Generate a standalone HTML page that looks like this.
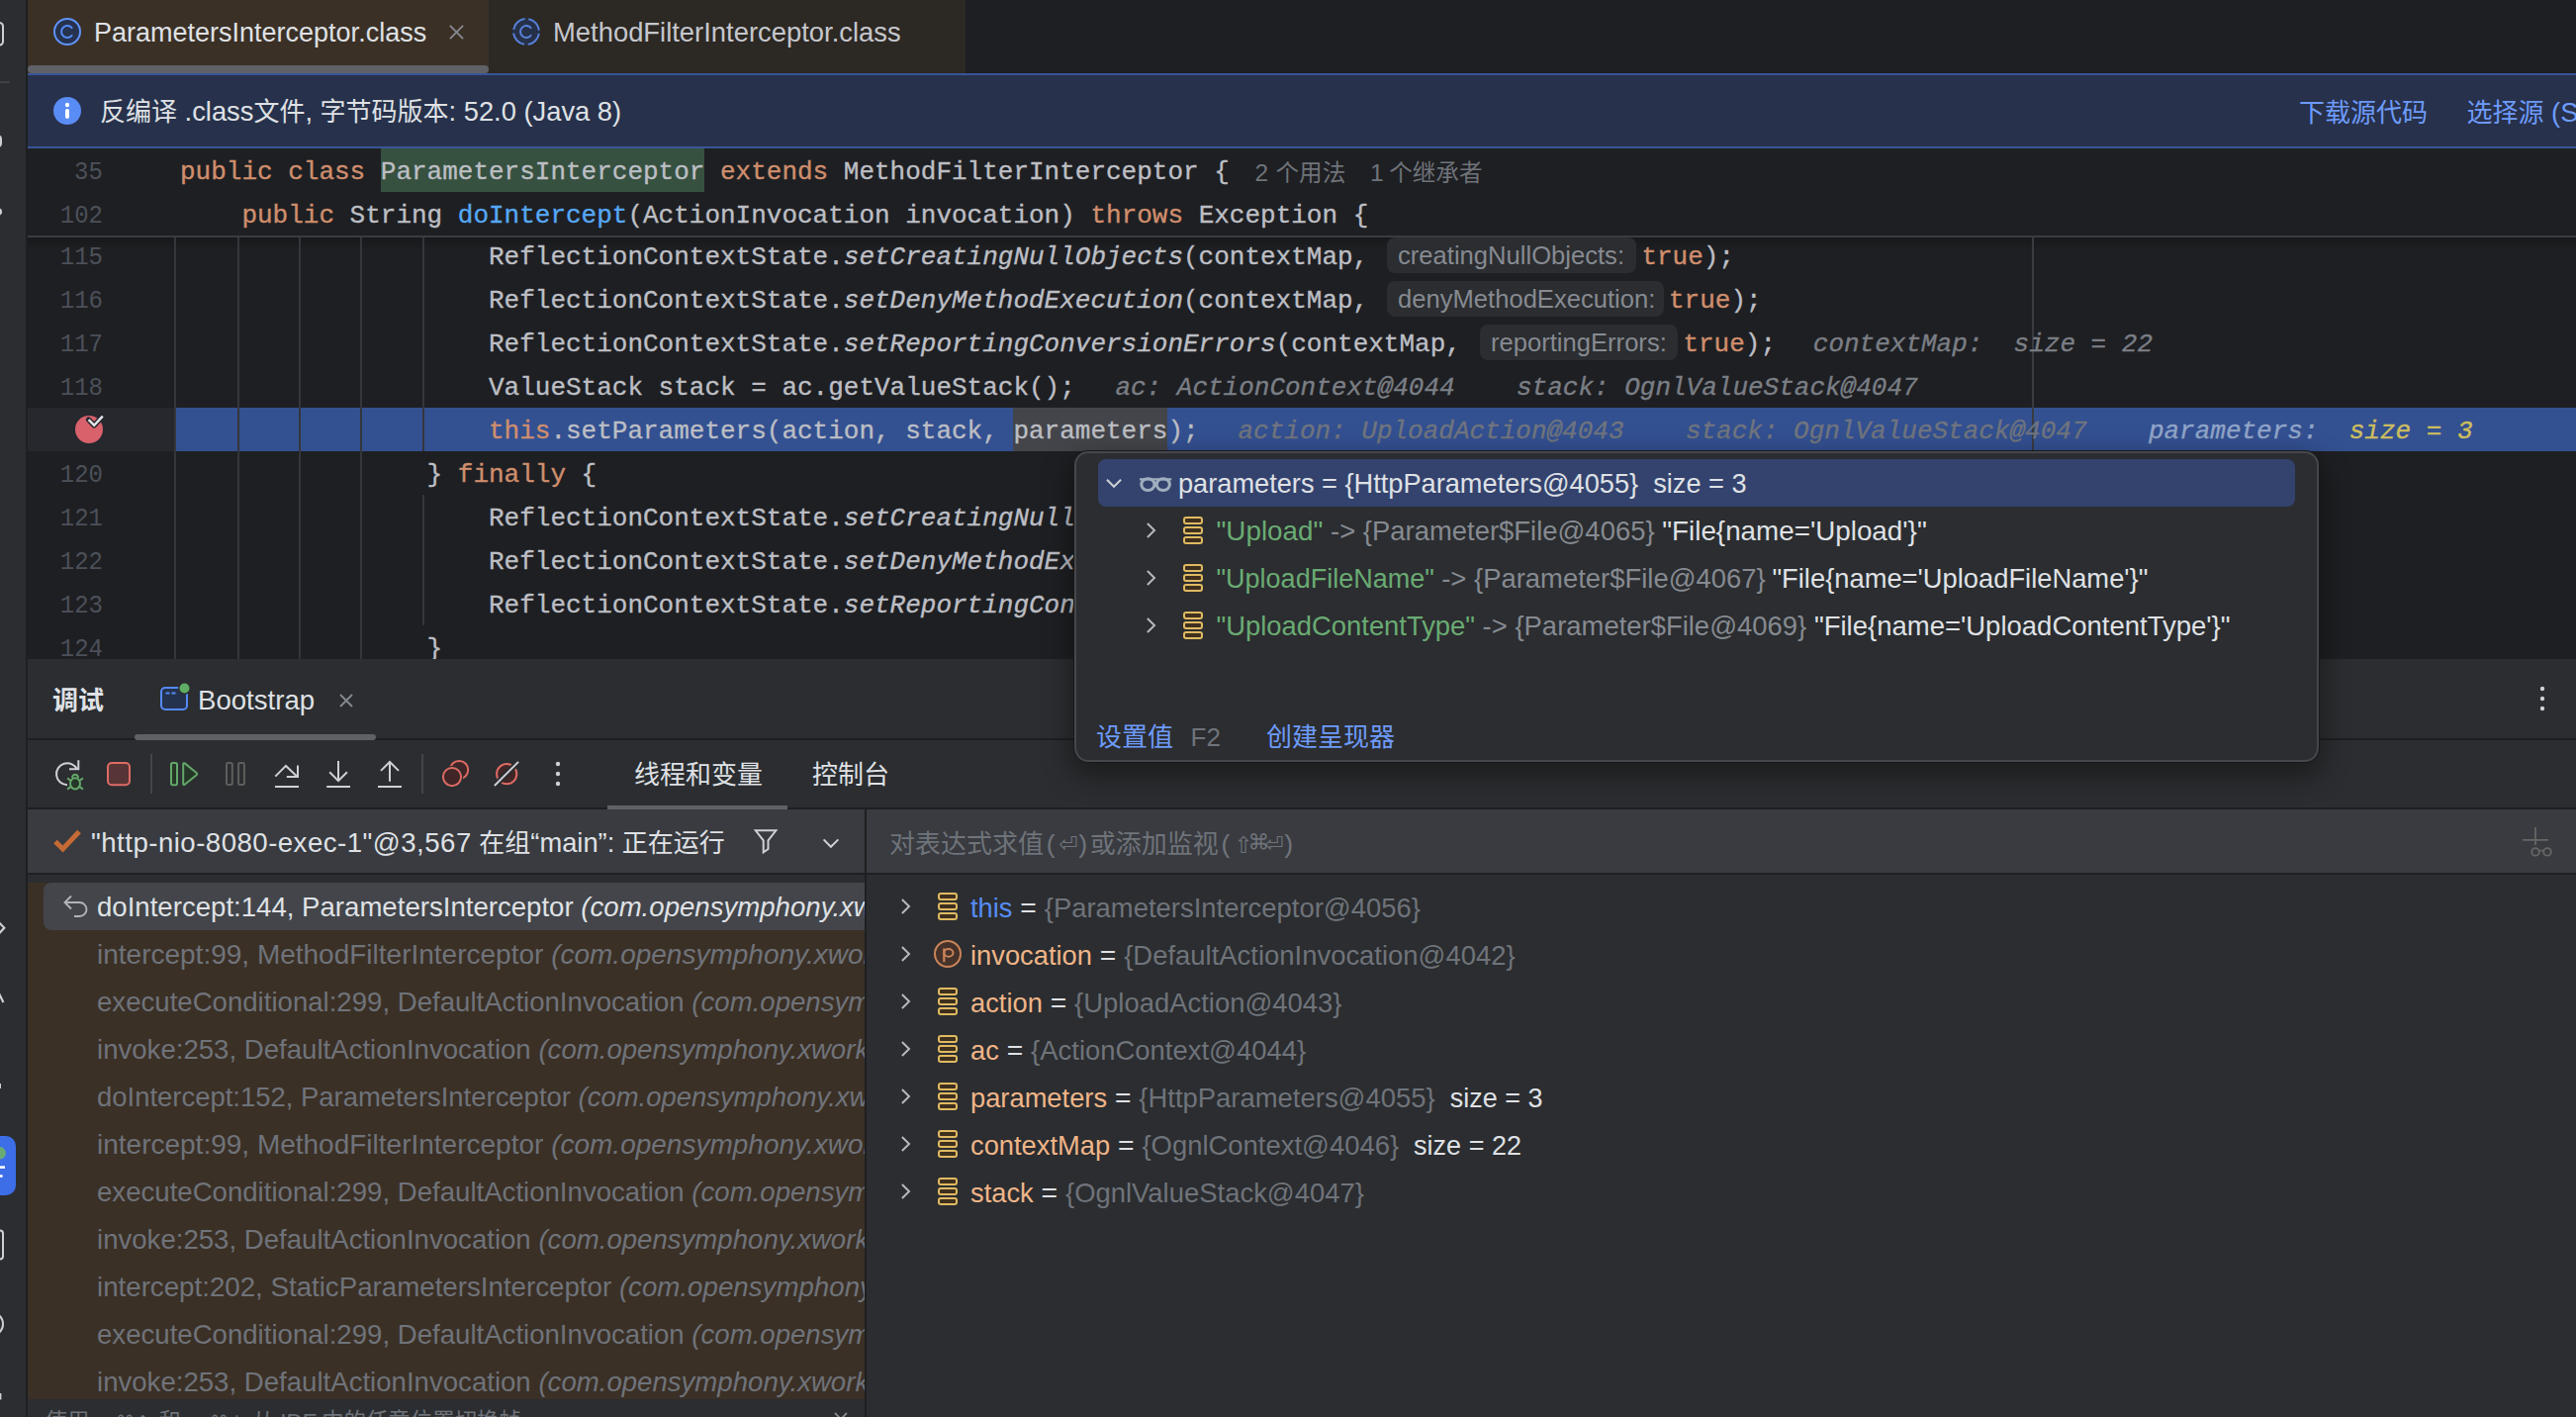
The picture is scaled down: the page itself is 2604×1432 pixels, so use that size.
<!DOCTYPE html>
<html lang="zh-CN"><head><meta charset="utf-8"><title>Debugger</title>
<style>
html,body{margin:0;padding:0;background:#1e1f22;}
body{width:2604px;height:1432px;position:relative;overflow:hidden;font-family:"Liberation Sans","Noto Sans CJK SC",sans-serif;color:#dfe1e5;font-size:27.3px;}
.a{position:absolute;}
.t{position:absolute;white-space:pre;margin-top:1px;}
.cj{font-size:26px;}
.code{position:absolute;white-space:pre;margin-top:2px;-webkit-text-stroke:0.35px;font-family:"Liberation Mono","DejaVu Sans Mono","Noto Sans CJK SC",monospace;font-size:26px;height:44px;line-height:44px;color:#bcbec4;letter-spacing:-0.0025px;}
.code i{font-style:italic;}
.kw{color:#cf8e6d;}
.fn{color:#56a8f5;}
.num{position:absolute;white-space:pre;margin-top:2px;font-family:"Liberation Mono","DejaVu Sans Mono","Noto Sans CJK SC",monospace;font-size:26px;height:44px;line-height:44px;color:#4b5059;text-align:right;width:80px;left:23.5px;transform:scaleX(0.925);transform-origin:right center;}
.hint{position:absolute;height:36px;line-height:36px;border-radius:8px;background:#2b2d30;color:#868a91;font-size:25.6px;white-space:pre;box-sizing:border-box;padding-left:11px;}
.dbg{color:#7a7e85;font-style:italic;}
.guide{position:absolute;width:2px;background:#34363b;}
.row{position:absolute;white-space:pre;height:48px;line-height:48px;margin-top:1px;}
.gr{color:#6f737a;}
.g2{color:#868a91;}
.or{color:#efb588;}
.bl{color:#568cf5;}
.st{color:#6aab73;}
.lk{color:#6b9bfa;}
svg{position:absolute;overflow:visible;}
</style></head>
<body>
<div class="a" style="left:0px;top:0px;width:26px;height:1432px;background:#2b2d30;"></div>
<div class="a" style="left:26px;top:0px;width:2px;height:1432px;background:#1e1f22;"></div>
<svg style="left:0;top:0;overflow:hidden" width="26" height="1432" viewBox="0 0 26 1432"><rect x="-14" y="23" width="17" height="22.6" rx="3.5" fill="none" stroke="#ced0d6" stroke-width="2"/><rect x="0" y="82.2" width="9.8" height="1.8" fill="#43454a"/><rect x="-10" y="137.4" width="11" height="10.6" rx="3" fill="none" stroke="#ced0d6" stroke-width="2"/><circle cx="-1.5" cy="214" r="3.6" fill="#ced0d6"/><path d="M-4 929 L4.3 937.8 L-4 946.6" fill="none" stroke="#ced0d6" stroke-width="2.2"/><path d="M-3 1000 L3.4 1013" fill="none" stroke="#ced0d6" stroke-width="2.2"/><rect x="-2" y="1095" width="3" height="5" fill="#ced0d6"/><rect x="-12" y="1148" width="28" height="60" rx="10" fill="#3d6ee8"/><circle cx="-0.5" cy="1165.2" r="6.3" fill="#6aab73"/><rect x="-2" y="1178.3" width="7" height="2.6" fill="#fff"/><rect x="-2" y="1187.2" width="4.6" height="2.6" fill="#fff"/><rect x="-14" y="1243.4" width="17" height="29" rx="3" fill="none" stroke="#ced0d6" stroke-width="2"/><circle cx="-8.6" cy="1338" r="11.6" fill="none" stroke="#ced0d6" stroke-width="2"/><rect x="-2" y="1408" width="3.4" height="6.4" fill="#ced0d6"/></svg>
<div class="a" style="left:28px;top:0px;width:466px;height:74px;background:#3b3026;"></div>
<div class="a" style="left:494px;top:0px;width:482px;height:74px;background:#2c2823;"></div>
<div class="a" style="left:28px;top:66px;width:466px;height:8px;background:#5f6166;border-radius:4px;"></div>
<svg style="left:54px;top:18px" width="28" height="28" viewBox="0 0 28 28"><circle cx="14" cy="14" r="13" fill="#26324e" stroke="#5f93f8" stroke-width="2"/><path d="M19.1 10.8 A6 6 0 1 0 19.1 17.2" fill="none" stroke="#548af7" stroke-width="2"/></svg>
<div class="t" style="left:95px;top:10px;height:44px;line-height:44px;font-size:27px;color:#dfe1e5;">ParametersInterceptor.class</div>
<svg style="left:454.3px;top:24.6px" width="15" height="15" viewBox="0 0 15 15"><path d="M0.9 0.9 L14.1 14.1 M14.1 0.9 L0.9 14.1" stroke="#868a91" stroke-width="1.8" fill="none"/></svg>
<svg style="left:518px;top:18px" width="28" height="28" viewBox="0 0 28 28"><circle cx="14" cy="14" r="14" fill="#263048"/><circle cx="14" cy="14" r="13" fill="none" stroke="#5880d7" stroke-width="2" stroke-dasharray="16.5 3.92" stroke-dashoffset="18.46"/><path d="M19.1 10.8 A6 6 0 1 0 19.1 17.2" fill="none" stroke="#5880d7" stroke-width="2"/></svg>
<div class="t" style="left:559px;top:10px;height:44px;line-height:44px;font-size:27.4px;color:#c5c7cd;">MethodFilterInterceptor.class</div>
<div class="a" style="left:28px;top:74px;width:2576px;height:76px;background:#385598;"></div>
<div class="a" style="left:28px;top:76px;width:2576px;height:72px;background:#27314b;"></div>
<svg style="left:54px;top:98px" width="28" height="28" viewBox="0 0 28 28"><circle cx="14" cy="14" r="14" fill="#5a8cf5"/><circle cx="14" cy="8" r="2.2" fill="#fff"/><rect x="12" y="12" width="4" height="10" rx="2" fill="#fff"/></svg>
<div class="t" style="left:101px;top:90px;height:44px;line-height:44px;color:#dfe1e5;"><span class="cj">反编译</span> .class<span class="cj">文件</span>, <span class="cj">字节码版本</span>: 52.0 (Java 8)</div>
<div class="t" style="left:2324px;top:90.5px;height:44px;line-height:44px;color:#6e9bfa;"><span class="cj">下载源代码</span></div>
<div class="t" style="left:2493.5px;top:90.5px;height:44px;line-height:44px;color:#6e9bfa;"><span class="cj">选择源</span> (Sources)</div>
<div class="a" style="left:28px;top:240px;width:2576px;height:12px;background:linear-gradient(#17181a,rgba(30,31,34,0))"></div>
<div class="guide" style="left:176px;top:240px;height:426px"></div>
<div class="guide" style="left:240px;top:240px;height:426px"></div>
<div class="guide" style="left:302px;top:240px;height:426px"></div>
<div class="guide" style="left:364px;top:240px;height:426px"></div>
<div class="guide" style="left:426.5px;top:240px;height:216px"></div>
<div class="guide" style="left:426.5px;top:500px;height:132px"></div>
<div class="a" style="left:2054px;top:240px;width:2px;height:426px;background:#393b40;"></div>
<div class="a" style="left:28px;top:412px;width:148px;height:44px;background:#26282e;"></div>
<div class="a" style="left:178px;top:412px;width:2426px;height:44px;background:#335091;"></div>
<div class="guide" style="left:240px;top:412px;height:44px;background:#34363b"></div>
<div class="guide" style="left:302px;top:412px;height:44px;background:#34363b"></div>
<div class="guide" style="left:364px;top:412px;height:44px;background:#34363b"></div>
<div class="guide" style="left:426.5px;top:412px;height:44px;background:#34363b"></div>
<div class="a" style="left:2054px;top:412px;width:2px;height:44px;background:#393b40;"></div>
<div class="a" style="left:1024.4px;top:412px;width:156.0px;height:44px;background:#43454a;"></div>
<div class="code" style="left:494.0px;top:236px">ReflectionContextState.<i>setCreatingNullObjects</i>(contextMap,</div>
<div class="num" style="top:236px">115</div>
<div class="hint" style="left:1402px;top:240px;width:252px">creatingNullObjects:</div>
<div class="code" style="left:1659.4px;top:236px;"><span class="kw">true</span>);</div>
<div class="code" style="left:494.0px;top:280px">ReflectionContextState.<i>setDenyMethodExecution</i>(contextMap,</div>
<div class="num" style="top:280px">116</div>
<div class="hint" style="left:1402px;top:284px;width:280px">denyMethodExecution:</div>
<div class="code" style="left:1687.0px;top:280px;"><span class="kw">true</span>);</div>
<div class="code" style="left:494.0px;top:324px">ReflectionContextState.<i>setReportingConversionErrors</i>(contextMap,</div>
<div class="num" style="top:324px">117</div>
<div class="hint" style="left:1496px;top:328px;width:200px">reportingErrors:</div>
<div class="code" style="left:1701.4px;top:324px;"><span class="kw">true</span>);</div>
<div class="code" style="left:1832.8px;top:324px;"><span class="dbg">contextMap:  size = 22</span></div>
<div class="code" style="left:494.0px;top:368px">ValueStack stack = ac.getValueStack();</div>
<div class="num" style="top:368px">118</div>
<div class="code" style="left:1127.4px;top:368px;"><span class="dbg">ac: ActionContext@4044    stack: OgnlValueStack@4047</span></div>
<div class="code" style="left:494.0px;top:412px"><span class="kw">this</span>.setParameters(action, stack, parameters);</div>
<div class="code" style="left:1251.5px;top:412px;"><span class="dbg" style="color:#70757e">action: UploadAction@4043    stack: OgnlValueStack@4047    </span><span class="dbg" style="color:#91a5c8">parameters:  </span><span class="dbg" style="color:#cdbe5f">size = 3</span></div>
<div class="code" style="left:431.6px;top:456px">} <span class="kw">finally</span> {</div>
<div class="num" style="top:456px">120</div>
<div class="code" style="left:494.0px;top:500px">ReflectionContextState.<i>setCreatingNullObjects</i>(contextMap, <span class="kw">false</span>);</div>
<div class="num" style="top:500px">121</div>
<div class="code" style="left:494.0px;top:544px">ReflectionContextState.<i>setDenyMethodExecution</i>(contextMap, <span class="kw">false</span>);</div>
<div class="num" style="top:544px">122</div>
<div class="code" style="left:494.0px;top:588px">ReflectionContextState.<i>setReportingConversionErrors</i>(contextMap, <span class="kw">false</span>);</div>
<div class="num" style="top:588px">123</div>
<div class="code" style="left:431.6px;top:632px">}</div>
<div class="num" style="top:632px">124</div>
<svg style="left:74px;top:416px" width="34" height="36" viewBox="0 0 34 36"><circle cx="16" cy="18" r="14" fill="#d8616b"/><path d="M15.6 8.2 L21.2 13.8 L29.8 4.7" fill="none" stroke="#26282e" stroke-width="5.4" stroke-linejoin="round" stroke-linecap="round"/><path d="M15.6 8.2 L21.2 13.8 L29.8 4.7" fill="none" stroke="#e4e5e9" stroke-width="2.5"/></svg>
<div class="a" style="left:28px;top:150px;width:2576px;height:88px;background:#1e1f22;"></div>
<div class="a" style="left:28px;top:238px;width:2576px;height:2px;background:#3a3c40;"></div>
<div class="a" style="left:384.79999999999995px;top:150px;width:327.59999999999997px;height:44px;background:#36513f;"></div>
<div class="code" style="left:182.0px;top:150px"><span class="kw">public class</span> ParametersInterceptor <span class="kw">extends</span> MethodFilterInterceptor {</div>
<div class="num" style="top:150px">35</div>
<div class="t" style="left:1268.5px;top:151.5px;height:44px;line-height:44px;font-size:24.6px;color:#6f737a;">2</div>
<div class="t" style="left:1289.5px;top:151.5px;height:44px;line-height:44px;font-size:23.6px;color:#6f737a;">个用法</div>
<div class="t" style="left:1385px;top:151.5px;height:44px;line-height:44px;font-size:24.6px;color:#6f737a;">1</div>
<div class="t" style="left:1404.2px;top:151.5px;height:44px;line-height:44px;font-size:23.6px;color:#6f737a;">个继承者</div>
<div class="code" style="left:244.4px;top:194px"><span class="kw">public</span> String <span class="fn">doIntercept</span>(ActionInvocation invocation) <span class="kw">throws</span> Exception {</div>
<div class="num" style="top:194px">102</div>
<div class="a" style="left:28px;top:666px;width:2576px;height:766px;background:#2b2d30;"></div>
<div class="a" style="left:28px;top:746px;width:2576px;height:2px;background:#1e1f22;"></div>
<div class="a" style="left:28px;top:816px;width:2576px;height:2px;background:#1e1f22;"></div>
<div class="a" style="left:28px;top:818px;width:2576px;height:64px;background:#393b40;"></div>
<div class="a" style="left:28px;top:882px;width:2576px;height:2px;background:#1e1f22;"></div>
<div class="a" style="left:874px;top:818px;width:2px;height:614px;background:#1e1f22;"></div>
<div class="t" style="left:53px;top:684px;height:46px;line-height:46px;font-size:26px;font-weight:bold;color:#dfe1e5;">调试</div>
<svg style="left:162px;top:689px" width="32" height="30" viewBox="0 0 32 30"><rect x="1" y="6" width="26" height="22" rx="4" fill="#25324d" stroke="#548af7" stroke-width="2"/><path d="M5.5 11.5 H9.5 M11.5 11.5 H15.5" stroke="#548af7" stroke-width="2"/><circle cx="24.5" cy="6.5" r="6.5" fill="#2b2d30"/><circle cx="24.5" cy="6.5" r="5" fill="#5fad65"/></svg>
<div class="t" style="left:200px;top:684px;height:46px;line-height:46px;font-size:27.6px;color:#dfe1e5;">Bootstrap</div>
<svg style="left:343px;top:701px" width="14" height="14" viewBox="0 0 14 14"><path d="M1 1 L13 13 M13 1 L1 13" stroke="#868a91" stroke-width="1.8" fill="none"/></svg>
<div class="a" style="left:136px;top:742px;width:244px;height:6px;background:#5f6166;border-radius:3px;"></div>
<svg style="left:2566px;top:692px" width="8" height="28" viewBox="0 0 8 28"><circle cx="4" cy="4" r="2.2" fill="#ced0d6"/><circle cx="4" cy="14" r="2.2" fill="#ced0d6"/><circle cx="4" cy="24" r="2.2" fill="#ced0d6"/></svg>
<svg style="left:0;top:0" width="2604" height="1432" viewBox="0 0 2604 1432"><path d="M77.89 777.38 A11 11 0 1 0 68 793.2" fill="none" stroke="#ced0d6" stroke-width="2"/><path d="M79.3 768.2 V777.2 H70" fill="none" stroke="#ced0d6" stroke-width="2"/><path d="M68.1 786.4 L72 789.2 M83.9 786.4 L80 789.2 M68.1 797.6 L72 794.6 M83.9 797.6 L80 794.6" fill="none" stroke="#64a669" stroke-width="2"/><path d="M73 786 A3 3.2 0 0 1 79 786" fill="#253627" stroke="#64a669" stroke-width="2"/><ellipse cx="76" cy="791.8" rx="5" ry="5.6" fill="#253627" stroke="#64a669" stroke-width="2"/><rect x="109" y="771" width="22" height="22.3" rx="4" fill="#573536" stroke="#de6b64" stroke-width="2"/><rect x="152" y="762" width="2" height="40" fill="#43454a"/><rect x="426" y="762" width="2" height="40" fill="#43454a"/><rect x="173" y="771" width="6" height="22.3" rx="1.5" fill="#253627" stroke="#64a669" stroke-width="2"/><path d="M185.2 772.2 Q185.2 770.6 186.8 771.4 L198.6 781 Q199.8 782.1 198.6 783.2 L186.8 792.8 Q185.2 793.6 185.2 792 Z" fill="#253627" stroke="#64a669" stroke-width="2" stroke-linejoin="round"/><rect x="229" y="771" width="5.8" height="22" rx="1.5" fill="none" stroke="#5e5e5d" stroke-width="2"/><rect x="241.1" y="771" width="5.8" height="22" rx="1.5" fill="none" stroke="#5e5e5d" stroke-width="2"/><path d="M278.3 784.6 L289 773.9 L300.6 784.9" fill="none" stroke="#ced0d6" stroke-width="2"/><path d="M301 773.5 V785 H289.8" fill="none" stroke="#ced0d6" stroke-width="2"/><path d="M278 795 H302" stroke="#ced0d6" stroke-width="2"/><path d="M342 769 V788.6 M333.2 780.3 L342 789.2 L350.9 780.3" fill="none" stroke="#ced0d6" stroke-width="2"/><path d="M330.2 795 H354" stroke="#ced0d6" stroke-width="2"/><path d="M394 789.8 V770.6 M385 778.9 L394 770 L403 778.9" fill="none" stroke="#ced0d6" stroke-width="2"/><path d="M382 795 H406" stroke="#ced0d6" stroke-width="2"/><circle cx="464.1" cy="778" r="9.1" fill="#402626" stroke="#de6b64" stroke-width="2"/><circle cx="457" cy="785.1" r="11.2" fill="#2b2d30"/><circle cx="457" cy="785.1" r="9.1" fill="#402626" stroke="#de6b64" stroke-width="2"/><circle cx="512.2" cy="782.2" r="10.1" fill="#402626" stroke="#de6b64" stroke-width="2"/><path d="M500.6 793.4 L523.6 770.4" stroke="#2b2d30" stroke-width="6"/><path d="M499.9 794 L524.1 769.9" stroke="#ced0d6" stroke-width="2"/><circle cx="564" cy="772" r="2.2" fill="#ced0d6"/><circle cx="564" cy="782" r="2.2" fill="#ced0d6"/><circle cx="564" cy="792" r="2.2" fill="#ced0d6"/></svg>
<div class="t" style="left:641px;top:759px;height:46px;line-height:46px;font-size:26px;color:#dfe1e5;">线程和变量</div>
<div class="t" style="left:821px;top:759px;height:46px;line-height:46px;font-size:26px;color:#dfe1e5;">控制台</div>
<div class="a" style="left:614px;top:814px;width:182px;height:4px;background:#5f6166;"></div>
<svg style="left:54px;top:838px" width="30" height="24" viewBox="0 0 30 24"><path d="M2 12.5 L9.5 20 L26 2.5" fill="none" stroke="#c66a35" stroke-width="5"/></svg>
<div class="t" style="left:92px;top:828px;height:46px;line-height:46px;color:#dfe1e5;"><span style="font-size:27.6px;letter-spacing:0.48px">"http-nio-8080-exec-1"@3,567</span> <span class="cj">在组</span>“main”: <span class="cj">正在运行</span></div>
<svg style="left:0;top:0" width="2604" height="1432" viewBox="0 0 2604 1432"><path d="M763.8 839.3 H784.4 L776.5 849.4 V858 L771.7 861.3 V849.4 Z" fill="none" stroke="#ced0d6" stroke-width="2" stroke-linejoin="miter"/><path d="M832.6 848.4 L839.9 855.8 L847.4 848.4" fill="none" stroke="#ced0d6" stroke-width="2"/></svg>
<div class="t" style="left:899px;top:827px;height:46px;line-height:46px;color:#6f737a;font-size:26px;font-family:'Liberation Mono','Noto Sans CJK SC',monospace;">对表达式求值<span style="display:inline-block;width:15.6px;text-align:center;font-family:'Liberation Mono',monospace;font-size:26px">(</span><span style="display:inline-block;width:15.6px;text-align:center;font-family:'DejaVu Sans Mono','DejaVu Sans',monospace;font-size:31px">⏎</span><span style="display:inline-block;width:15.6px;text-align:center;font-family:'Liberation Mono',monospace;font-size:26px">)</span>或添加监视<span style="display:inline-block;width:15.6px;text-align:center;font-family:'Liberation Mono',monospace;font-size:26px">(</span><span style="display:inline-block;width:15.6px;text-align:center;font-family:'DejaVu Sans Mono','DejaVu Sans',monospace;font-size:31px">⇧</span><span style="display:inline-block;width:15.6px;text-align:center;font-family:'DejaVu Sans Mono','DejaVu Sans',monospace;font-size:31px">⌘</span><span style="display:inline-block;width:15.6px;text-align:center;font-family:'DejaVu Sans Mono','DejaVu Sans',monospace;font-size:31px">⏎</span><span style="display:inline-block;width:15.6px;text-align:center;font-family:'Liberation Mono',monospace;font-size:26px">)</span></div>
<svg style="left:0;top:0" width="2604" height="1432" viewBox="0 0 2604 1432"><path d="M2563 836 V854 M2550 848.8 H2576" stroke="#666765" stroke-width="1.8" fill="none"/><circle cx="2563" cy="860.9" r="3.8" fill="none" stroke="#666765" stroke-width="1.8"/><circle cx="2575" cy="860.9" r="3.8" fill="none" stroke="#666765" stroke-width="1.8"/><path d="M2566.6 859.6 H2571.4" stroke="#666765" stroke-width="1.6"/></svg>
<div class="a" style="left:28px;top:892px;width:846px;height:522px;background:#3b3026;overflow:hidden">
<div class="a" style="left:16px;top:0;width:900px;height:48px;background:#43454a;border-radius:8px"></div>
<div class="row" style="left:70px;top:0px;color:#dfe1e5;font-size:27.6px">doIntercept:144, ParametersInterceptor <i>(com.opensymphony.xwork2.interceptor)</i></div>
<div class="row" style="left:70px;top:48px;color:#6f737a;font-size:28.0px">intercept:99, MethodFilterInterceptor <i>(com.opensymphony.xwork2.interceptor)</i></div>
<div class="row" style="left:70px;top:96px;color:#6f737a;font-size:27.6px">executeConditional:299, DefaultActionInvocation <i>(com.opensymphony.xwork2)</i></div>
<div class="row" style="left:70px;top:144px;color:#6f737a;font-size:27.6px">invoke:253, DefaultActionInvocation <i>(com.opensymphony.xwork2)</i></div>
<div class="row" style="left:70px;top:192px;color:#6f737a;font-size:27.45px">doIntercept:152, ParametersInterceptor <i>(com.opensymphony.xwork2.interceptor)</i></div>
<div class="row" style="left:70px;top:240px;color:#6f737a;font-size:28.0px">intercept:99, MethodFilterInterceptor <i>(com.opensymphony.xwork2.interceptor)</i></div>
<div class="row" style="left:70px;top:288px;color:#6f737a;font-size:27.6px">executeConditional:299, DefaultActionInvocation <i>(com.opensymphony.xwork2)</i></div>
<div class="row" style="left:70px;top:336px;color:#6f737a;font-size:27.6px">invoke:253, DefaultActionInvocation <i>(com.opensymphony.xwork2)</i></div>
<div class="row" style="left:70px;top:384px;color:#6f737a;font-size:27.7px">intercept:202, StaticParametersInterceptor <i>(com.opensymphony.xwork2.interceptor)</i></div>
<div class="row" style="left:70px;top:432px;color:#6f737a;font-size:27.6px">executeConditional:299, DefaultActionInvocation <i>(com.opensymphony.xwork2)</i></div>
<div class="row" style="left:70px;top:480px;color:#6f737a;font-size:27.6px">invoke:253, DefaultActionInvocation <i>(com.opensymphony.xwork2)</i></div>
<svg style="left:36px;top:12px" width="26" height="24" viewBox="0 0 26 24"><path d="M8 1.5 L1.5 8 L8 14.5 M2 8 H16.5 A7 7 0 0 1 16.5 22 H11" fill="none" stroke="#b0b3ba" stroke-width="1.9"/></svg>
</div>
<div class="t" style="left:45.5px;top:1412px;height:48px;line-height:48px;font-size:22.4px;color:#6f737a;">使用</div>
<div class="t" style="left:94.6px;top:1412px;height:48px;line-height:48px;font-size:22.4px;color:#6f737a;font-family:'DejaVu Sans',sans-serif;font-size:19px;letter-spacing:0.5px;">⌥⌘↑</div>
<div class="t" style="left:160.5px;top:1412px;height:48px;line-height:48px;font-size:22.4px;color:#6f737a;">和</div>
<div class="t" style="left:189.5px;top:1412px;height:48px;line-height:48px;font-size:22.4px;color:#6f737a;font-family:'DejaVu Sans',sans-serif;font-size:19px;letter-spacing:0.5px;">⌥⌘↓</div>
<div class="t" style="left:255px;top:1412px;height:48px;line-height:48px;font-size:22.4px;color:#6f737a;">从</div>
<div class="t" style="left:283.3px;top:1412px;height:48px;line-height:48px;font-size:22.4px;color:#6f737a;">IDE</div>
<div class="t" style="left:325.2px;top:1412px;height:48px;line-height:48px;font-size:22.4px;color:#6f737a;">中的任意位置切换帧</div>
<svg style="left:843px;top:1427px" width="14" height="14" viewBox="0 0 14 14"><path d="M1 1 L13 13 M13 1 L1 13" stroke="#868a91" stroke-width="1.8" fill="none"/></svg>
<svg style="left:910px;top:907px" width="11" height="18" viewBox="0 0 11 18"><path d="M1.9 2 L9 9 L1.9 16" fill="none" stroke="#b4b8bf" stroke-width="2"/></svg>
<svg style="left:948px;top:902px" width="20" height="28" viewBox="0 0 20 28"><rect x="1" y="1" width="18" height="6" rx="2" fill="#3f301e" stroke="#e0ba62" stroke-width="2"/><rect x="1" y="11" width="18" height="6" rx="2" fill="#3f301e" stroke="#e0ba62" stroke-width="2"/><rect x="1" y="21" width="18" height="6" rx="2" fill="#3f301e" stroke="#e0ba62" stroke-width="2"/></svg>
<div class="row" style="left:981px;top:892px;font-size:27.3px"><span class="bl">this</span><span style="font-size:28.3px"> = </span><span class="gr" style="font-size:27.45px">{ParametersInterceptor@4056}</span><span style="font-size:27px"></span></div>
<svg style="left:910px;top:955px" width="11" height="18" viewBox="0 0 11 18"><path d="M1.9 2 L9 9 L1.9 16" fill="none" stroke="#b4b8bf" stroke-width="2"/></svg>
<svg style="left:944px;top:950px" width="28" height="28" viewBox="0 0 28 28"><circle cx="14" cy="14" r="13" fill="#45322a" stroke="#cb8459" stroke-width="2"/><path d="M10.3 8.4 V22.2" fill="none" stroke="#cb8459" stroke-width="2.2"/><ellipse cx="14.9" cy="12.9" rx="4.6" ry="3.8" fill="none" stroke="#cb8459" stroke-width="2"/></svg>
<div class="row" style="left:981px;top:940px;font-size:27.3px"><span class="or">invocation</span><span style="font-size:28.3px"> = </span><span class="gr" style="font-size:27.45px">{DefaultActionInvocation@4042}</span><span style="font-size:27px"></span></div>
<svg style="left:910px;top:1003px" width="11" height="18" viewBox="0 0 11 18"><path d="M1.9 2 L9 9 L1.9 16" fill="none" stroke="#b4b8bf" stroke-width="2"/></svg>
<svg style="left:948px;top:998px" width="20" height="28" viewBox="0 0 20 28"><rect x="1" y="1" width="18" height="6" rx="2" fill="#3f301e" stroke="#e0ba62" stroke-width="2"/><rect x="1" y="11" width="18" height="6" rx="2" fill="#3f301e" stroke="#e0ba62" stroke-width="2"/><rect x="1" y="21" width="18" height="6" rx="2" fill="#3f301e" stroke="#e0ba62" stroke-width="2"/></svg>
<div class="row" style="left:981px;top:988px;font-size:27.3px"><span class="or">action</span><span style="font-size:28.3px"> = </span><span class="gr" style="font-size:27.45px">{UploadAction@4043}</span><span style="font-size:27px"></span></div>
<svg style="left:910px;top:1051px" width="11" height="18" viewBox="0 0 11 18"><path d="M1.9 2 L9 9 L1.9 16" fill="none" stroke="#b4b8bf" stroke-width="2"/></svg>
<svg style="left:948px;top:1046px" width="20" height="28" viewBox="0 0 20 28"><rect x="1" y="1" width="18" height="6" rx="2" fill="#3f301e" stroke="#e0ba62" stroke-width="2"/><rect x="1" y="11" width="18" height="6" rx="2" fill="#3f301e" stroke="#e0ba62" stroke-width="2"/><rect x="1" y="21" width="18" height="6" rx="2" fill="#3f301e" stroke="#e0ba62" stroke-width="2"/></svg>
<div class="row" style="left:981px;top:1036px;font-size:27.3px"><span class="or">ac</span><span style="font-size:28.3px"> = </span><span class="gr" style="font-size:27.45px">{ActionContext@4044}</span><span style="font-size:27px"></span></div>
<svg style="left:910px;top:1099px" width="11" height="18" viewBox="0 0 11 18"><path d="M1.9 2 L9 9 L1.9 16" fill="none" stroke="#b4b8bf" stroke-width="2"/></svg>
<svg style="left:948px;top:1094px" width="20" height="28" viewBox="0 0 20 28"><rect x="1" y="1" width="18" height="6" rx="2" fill="#3f301e" stroke="#e0ba62" stroke-width="2"/><rect x="1" y="11" width="18" height="6" rx="2" fill="#3f301e" stroke="#e0ba62" stroke-width="2"/><rect x="1" y="21" width="18" height="6" rx="2" fill="#3f301e" stroke="#e0ba62" stroke-width="2"/></svg>
<div class="row" style="left:981px;top:1084px;font-size:27.3px"><span class="or">parameters</span><span style="font-size:28.3px"> = </span><span class="gr" style="font-size:27.45px">{HttpParameters@4055}</span><span style="font-size:27px">  size = 3</span></div>
<svg style="left:910px;top:1147px" width="11" height="18" viewBox="0 0 11 18"><path d="M1.9 2 L9 9 L1.9 16" fill="none" stroke="#b4b8bf" stroke-width="2"/></svg>
<svg style="left:948px;top:1142px" width="20" height="28" viewBox="0 0 20 28"><rect x="1" y="1" width="18" height="6" rx="2" fill="#3f301e" stroke="#e0ba62" stroke-width="2"/><rect x="1" y="11" width="18" height="6" rx="2" fill="#3f301e" stroke="#e0ba62" stroke-width="2"/><rect x="1" y="21" width="18" height="6" rx="2" fill="#3f301e" stroke="#e0ba62" stroke-width="2"/></svg>
<div class="row" style="left:981px;top:1132px;font-size:27.3px"><span class="or">contextMap</span><span style="font-size:28.3px"> = </span><span class="gr" style="font-size:27.45px">{OgnlContext@4046}</span><span style="font-size:27px">  size = 22</span></div>
<svg style="left:910px;top:1195px" width="11" height="18" viewBox="0 0 11 18"><path d="M1.9 2 L9 9 L1.9 16" fill="none" stroke="#b4b8bf" stroke-width="2"/></svg>
<svg style="left:948px;top:1190px" width="20" height="28" viewBox="0 0 20 28"><rect x="1" y="1" width="18" height="6" rx="2" fill="#3f301e" stroke="#e0ba62" stroke-width="2"/><rect x="1" y="11" width="18" height="6" rx="2" fill="#3f301e" stroke="#e0ba62" stroke-width="2"/><rect x="1" y="21" width="18" height="6" rx="2" fill="#3f301e" stroke="#e0ba62" stroke-width="2"/></svg>
<div class="row" style="left:981px;top:1180px;font-size:27.3px"><span class="or">stack</span><span style="font-size:28.3px"> = </span><span class="gr" style="font-size:27.45px">{OgnlValueStack@4047}</span><span style="font-size:27px"></span></div>
<div class="a" style="left:1086px;top:456px;width:1258px;height:314px;box-sizing:border-box;background:#2b2d30;border:2px solid #45474c;border-radius:14px;box-shadow:0 0 0 1px #17181a, 0 10px 28px 4px rgba(0,0,0,0.38)"></div>
<div class="a" style="left:1110px;top:464px;width:1210px;height:48px;background:#34436e;border-radius:8px;"></div>
<svg style="left:0;top:0" width="2604" height="1432" viewBox="0 0 2604 1432"><path d="M1119 484.8 L1126 491.8 L1133.1 484.8" fill="none" stroke="#ced0d6" stroke-width="2"/><ellipse cx="1160.4" cy="489.6" rx="6.6" ry="5.9" fill="none" stroke="#a0afbe" stroke-width="3"/><ellipse cx="1175.8" cy="489.6" rx="6.6" ry="5.9" fill="none" stroke="#a0afbe" stroke-width="3"/><path d="M1152 484.4 H1184.2" stroke="#a0afbe" stroke-width="2.4"/></svg>
<div class="row" style="left:1191px;top:464px;font-size:27.2px">parameters = {HttpParameters@4055}  size = 3</div>
<svg style="left:1158px;top:527px" width="11" height="18" viewBox="0 0 11 18"><path d="M1.9 2 L9 9 L1.9 16" fill="none" stroke="#b4b8bf" stroke-width="2"/></svg>
<svg style="left:1196px;top:522px" width="20" height="28" viewBox="0 0 20 28"><rect x="1" y="1" width="18" height="6" rx="2" fill="#3f301e" stroke="#e0ba62" stroke-width="2"/><rect x="1" y="11" width="18" height="6" rx="2" fill="#3f301e" stroke="#e0ba62" stroke-width="2"/><rect x="1" y="21" width="18" height="6" rx="2" fill="#3f301e" stroke="#e0ba62" stroke-width="2"/></svg>
<div class="row st" style="left:1229.5px;top:512px;font-size:27.8px">&quot;Upload&quot;</div>
<div class="row g2" style="left:1337.4px;top:512px;font-size:27.44px"> -&gt; {Parameter$File@4065}</div>
<div class="row" style="left:1680.2px;top:512px;font-size:27.8px">&quot;File{name=&#x27;Upload&#x27;}&quot;</div>
<svg style="left:1158px;top:575px" width="11" height="18" viewBox="0 0 11 18"><path d="M1.9 2 L9 9 L1.9 16" fill="none" stroke="#b4b8bf" stroke-width="2"/></svg>
<svg style="left:1196px;top:570px" width="20" height="28" viewBox="0 0 20 28"><rect x="1" y="1" width="18" height="6" rx="2" fill="#3f301e" stroke="#e0ba62" stroke-width="2"/><rect x="1" y="11" width="18" height="6" rx="2" fill="#3f301e" stroke="#e0ba62" stroke-width="2"/><rect x="1" y="21" width="18" height="6" rx="2" fill="#3f301e" stroke="#e0ba62" stroke-width="2"/></svg>
<div class="row st" style="left:1229.5px;top:560px;font-size:27.0px">&quot;UploadFileName&quot;</div>
<div class="row g2" style="left:1449.6px;top:560px;font-size:27.44px"> -&gt; {Parameter$File@4067}</div>
<div class="row" style="left:1791.4px;top:560px;font-size:27.34px">&quot;File{name=&#x27;UploadFileName&#x27;}&quot;</div>
<svg style="left:1158px;top:623px" width="11" height="18" viewBox="0 0 11 18"><path d="M1.9 2 L9 9 L1.9 16" fill="none" stroke="#b4b8bf" stroke-width="2"/></svg>
<svg style="left:1196px;top:618px" width="20" height="28" viewBox="0 0 20 28"><rect x="1" y="1" width="18" height="6" rx="2" fill="#3f301e" stroke="#e0ba62" stroke-width="2"/><rect x="1" y="11" width="18" height="6" rx="2" fill="#3f301e" stroke="#e0ba62" stroke-width="2"/><rect x="1" y="21" width="18" height="6" rx="2" fill="#3f301e" stroke="#e0ba62" stroke-width="2"/></svg>
<div class="row st" style="left:1229.5px;top:608px;font-size:27.4px">&quot;UploadContentType&quot;</div>
<div class="row g2" style="left:1491px;top:608px;font-size:27.44px"> -&gt; {Parameter$File@4069}</div>
<div class="row" style="left:1833.9px;top:608px;font-size:27.5px">&quot;File{name=&#x27;UploadContentType&#x27;}&quot;</div>
<div class="t" style="left:1108px;top:721px;height:46px;line-height:46px;color:#6e9bfa;"><span class="cj">设置值</span></div>
<div class="t" style="left:1203.5px;top:721px;height:46px;line-height:46px;color:#6f737a;font-size:26px;">F2</div>
<div class="t" style="left:1280px;top:721px;height:46px;line-height:46px;color:#6e9bfa;"><span class="cj">创建呈现器</span></div>
</body></html>
